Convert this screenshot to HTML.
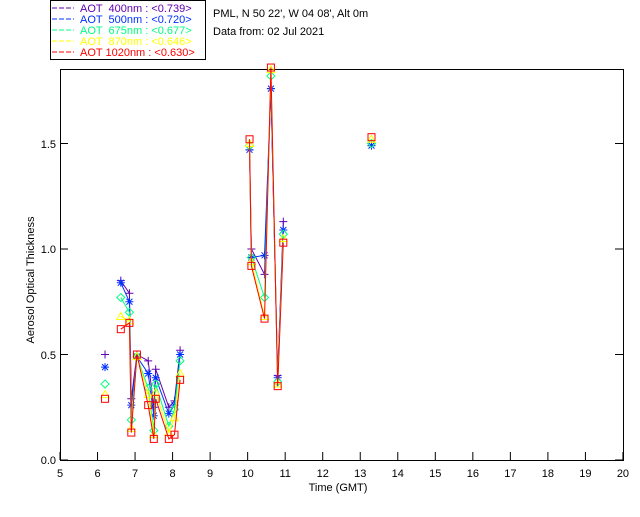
<!DOCTYPE html>
<html><head><meta charset="utf-8"><style>
body{margin:0;background:#fff;width:640px;height:512px;overflow:hidden}
svg text{font-family:"Liberation Sans",sans-serif;font-size:11px;white-space:pre}
</style></head><body>
<svg id="s" width="640" height="512" xmlns="http://www.w3.org/2000/svg">
<rect x="50.5" y="0.5" width="155" height="59" fill="#fff" stroke="#000"/>
<g font-size="11">
<line x1="52" y1="8" x2="74" y2="8" stroke="#6000b0" stroke-dasharray="5,2"/><text x="80" y="12" fill="#6000b0">AOT  400nm : &lt;0.739&gt;</text>
<line x1="52" y1="19" x2="74" y2="19" stroke="#0030ff" stroke-dasharray="5,2"/><text x="80" y="23" fill="#0030ff">AOT  500nm : &lt;0.720&gt;</text>
<line x1="52" y1="30" x2="74" y2="30" stroke="#00ff80" stroke-dasharray="5,2"/><text x="80" y="34" fill="#00ff80">AOT  675nm : &lt;0.677&gt;</text>
<line x1="52" y1="41" x2="74" y2="41" stroke="#ffff00" stroke-dasharray="5,2"/><text x="80" y="45" fill="#ffff00">AOT  870nm : &lt;0.646&gt;</text>
<line x1="52" y1="52" x2="74" y2="52" stroke="#ff0000" stroke-dasharray="5,2"/><text x="80" y="56" fill="#ff0000">AOT 1020nm : &lt;0.630&gt;</text>
</g>
<text x="213" y="17">PML, N 50 22', W 04 08', Alt 0m</text>
<text x="213" y="35">Data from: 02 Jul 2021</text>
<rect x="60.5" y="69.5" width="563" height="391" fill="none" stroke="#000"/>
<g id="ax"></g>
<g text-anchor="end">
<text x="56" y="464">0.0</text><text x="56" y="359">0.5</text><text x="56" y="253">1.0</text><text x="56" y="148">1.5</text>
</g>
<text x="338" y="491" text-anchor="middle">Time (GMT)</text>
<text transform="translate(34,280) rotate(-90)" text-anchor="middle" font-size="10">Aerosol Optical Thickness</text>
<g id="d"></g>
</svg>
<script>
var ns="http://www.w3.org/2000/svg",ax=document.getElementById('ax'),d=document.getElementById('d');
function X(t){return 60+(t-5)*37.53}function Y(v){return 460-v*211}
function el(n,a,p){var e=document.createElementNS(ns,n);for(var k in a)e.setAttribute(k,a[k]);(p||d).appendChild(e);return e}
for(var h=5;h<=20;h++){var x=X(h);el('line',{x1:x,y1:460,x2:x,y2:452,stroke:'#000'},ax);var t=el('text',{x:x,y:477,'text-anchor':'middle'},ax);t.textContent=h;}
[0,0.5,1,1.5].forEach(function(v){el('line',{x1:60,y1:Y(v),x2:68,y2:Y(v),stroke:'#000'},ax);el('line',{x1:623,y1:Y(v),x2:615,y2:Y(v),stroke:'#000'},ax)});
var T=[6.2,6.62,6.85,6.9,7.05,7.35,7.5,7.55,7.9,8.05,8.2,10.05,10.1,10.45,10.62,10.8,10.95,13.3];
var S={
p:[0.50,0.85,0.79,0.29,0.5,0.47,0.25,0.43,0.25,0.28,0.52,1.47,1.0,0.88,1.76,0.40,1.13,1.49],
b:[0.44,0.84,0.75,0.26,0.49,0.41,0.21,0.39,0.22,0.26,0.50,1.47,0.96,0.97,1.76,0.39,1.09,1.49],
g:[0.36,0.77,0.70,0.19,0.49,0.34,0.14,0.36,0.16,0.24,0.47,1.49,0.96,0.77,1.82,0.37,1.07,1.50],
y:[0.31,0.68,0.66,0.15,0.49,0.31,0.12,0.32,0.13,0.20,0.41,1.50,0.94,0.68,1.85,0.36,1.05,1.52],
r:[0.29,0.62,0.65,0.13,0.50,0.26,0.10,0.29,0.10,0.12,0.38,1.52,0.92,0.67,1.86,0.35,1.03,1.53]};
var C={p:'#6000b0',b:'#0030ff',g:'#00ff80',y:'#ffff00',r:'#ff0000'};
var segs=[[1,10],[11,16]];
['p','b','g','y','r'].forEach(function(k){var v=S[k],c=C[k];
segs.forEach(function(sg){var pts=[];for(var i=sg[0];i<=sg[1];i++)pts.push(X(T[i])+','+Y(v[i]));el('polyline',{points:pts.join(' '),fill:'none',stroke:c,'stroke-width':1})});
for(var i=0;i<T.length;i++){var x=X(T[i]),y=Y(v[i]);
if(k=='p'){el('path',{d:'M'+(x-4)+' '+y+'h8M'+x+' '+(y-4)+'v8',stroke:c,fill:'none'})}
else if(k=='b'){el('path',{d:'M'+(x-4)+' '+y+'h8M'+x+' '+(y-4)+'v8M'+(x-3)+' '+(y-3)+'l6 6M'+(x+3)+' '+(y-3)+'l-6 6',stroke:c,fill:'none'})}
else if(k=='g'){el('path',{d:'M'+x+' '+(y-4)+'l4 4l-4 4l-4 -4z',stroke:c,fill:'none'})}
else if(k=='y'){el('path',{d:'M'+x+' '+(y-4)+'l4 7h-8z',stroke:c,fill:'none'})}
else{el('rect',{x:x-3.5,y:y-3.5,width:7,height:7,stroke:c,fill:'none'})}}
});
</script>
</body></html>
